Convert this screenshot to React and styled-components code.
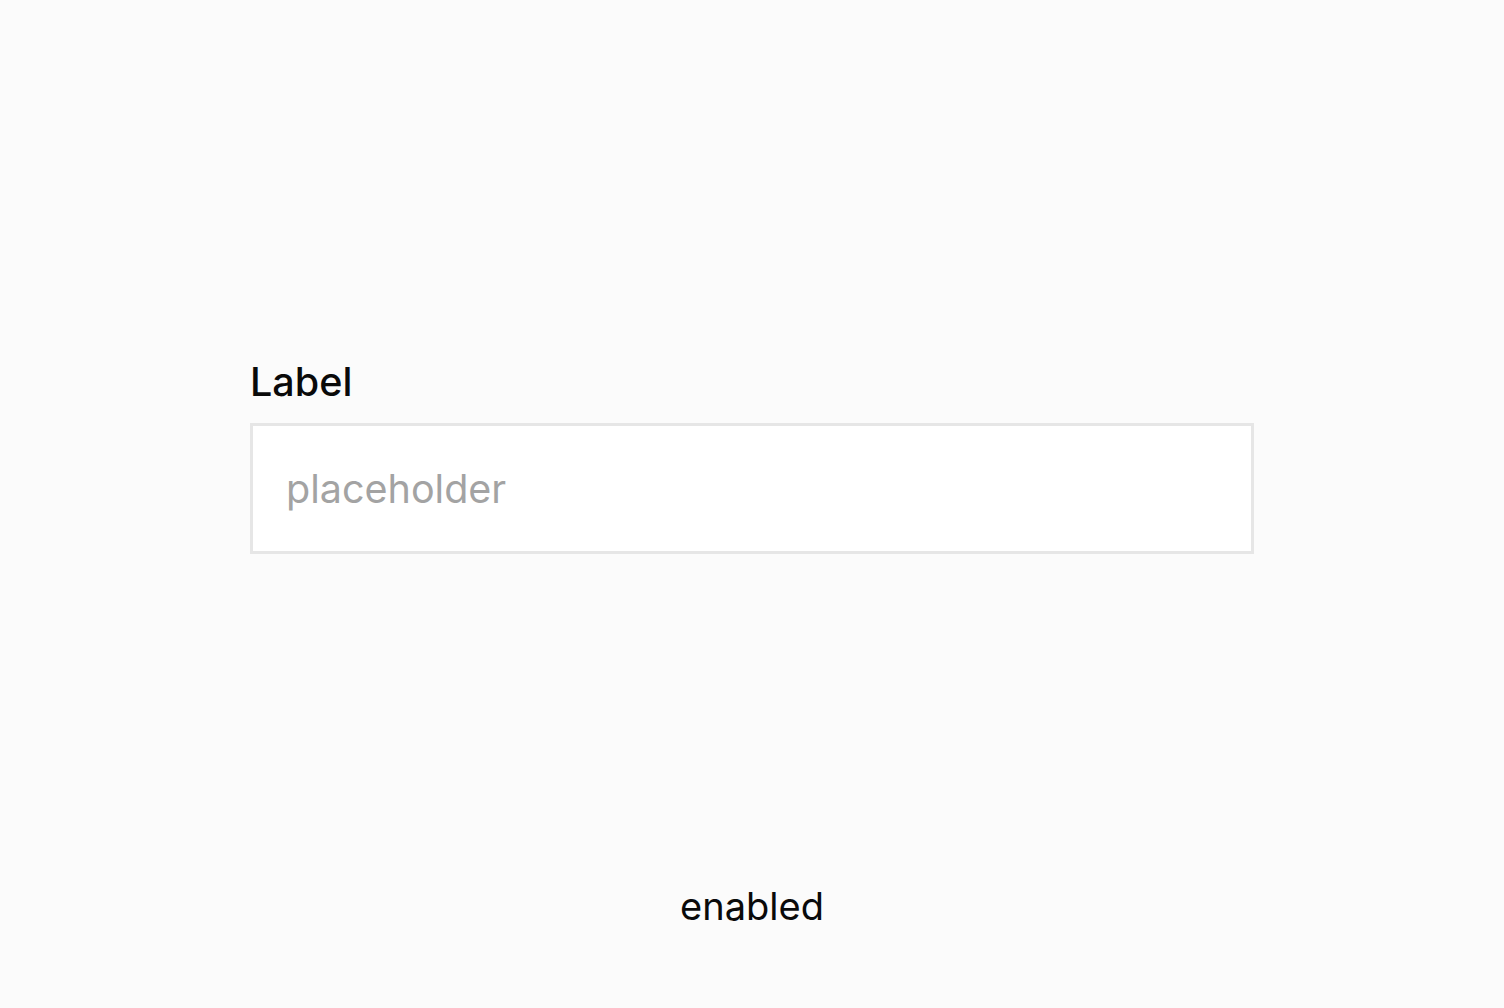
import { createGlobalStyle, styled } from "styled-components";

const GlobalStyle = createGlobalStyle`
  html, body {
    margin: 0;
    padding: 0;
    background-color: #fbfbfb;
    font-family: Inter, "Noto Sans", sans-serif;
  }
`;

const Page = styled.div`
  width: 100%;
  height: 1008px;
  display: flex;
  flex-direction: column;
  align-items: center;
  box-sizing: border-box;
  padding-top: 358px;
`;

const Field = styled.div`
  width: 1004px;
  display: flex;
  flex-direction: column;
  gap: 17px;
`;

const Label = styled.label`
  font-size: 39.5px;
  font-weight: 500;
  line-height: 48px;
  color: #0a0a0a;
`;

const Input = styled.input`
  box-sizing: border-box;
  width: 100%;
  height: 131px;
  padding: 0 33px;
  border: 3px solid #e6e6e6;
  border-radius: 0;
  background: #fff;
  outline: none;
  font-family: Inter, "Noto Sans", sans-serif;
  font-size: 39.5px;
  color: #111;

  &::placeholder {
    color: #a3a3a3;
  }
`;

const Status = styled.div`
  margin-top: auto;
  margin-bottom: 78px;
  font-size: 38px;
  line-height: 48px;
  color: #0a0a0a;
`;

export default function App() {
  return (
    <>
      <GlobalStyle />
      <Page>
        <Field>
          <Label htmlFor="field">Label</Label>
          <Input id="field" type="text" placeholder="placeholder" />
        </Field>
        <Status>enabled</Status>
      </Page>
    </>
  );
}
